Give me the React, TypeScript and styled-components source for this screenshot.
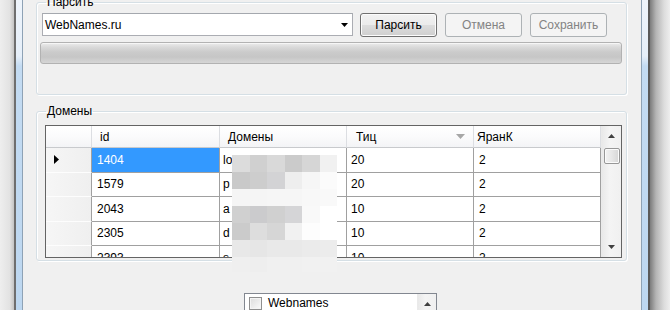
import { Fragment } from "react";
import styled, { createGlobalStyle } from "styled-components";

const GlobalStyle = createGlobalStyle`
  html, body { margin: 0; padding: 0; }
  body { background: #ececec; }
`;

type Row = { id: string; domain: string; tic: string; rank: string };

const rows: Row[] = [
  { id: "1404", domain: "lo", tic: "20", rank: "2" },
  { id: "1579", domain: "p", tic: "20", rank: "2" },
  { id: "2043", domain: "a", tic: "10", rank: "2" },
  { id: "2305", domain: "d", tic: "10", rank: "2" },
  { id: "2393", domain: "s", tic: "10", rank: "2" },
];

const columns = [
  { title: "id", pad: 8, sort: false },
  { title: "Домены", pad: 8, sort: false },
  { title: "Тиц", pad: 9, sort: true },
  { title: "ЯранК", pad: 3, sort: false },
];

// pixelated blur over the domain column
const mosaic = [
  ["#dcdcdc", "#d0d0d0", "#d9d9d9", "#cbcbcb", "#d6d6d6", "#f1f1f1"],
  ["#c9c9c9", "#cdcdcd", "#d3d3d5", "#eeeeee", "#f6f6f6", "#fbfbfb"],
  ["#f5f5f5", "#f5f5f5", "#f6f6f6", "#f6f6f6", "#f8f8f8", "#f9f9f9"],
  ["#d0d0d0", "#cbcbcd", "#d0d0d0", "#d5d5d7", "#f9f9f9", "#ffffff"],
  ["#cbcbcb", "#dddddd", "#d6d6d6", "#f1f1f1", "#fdfdfd", "#ffffff"],
  ["#e8e8e8", "#e6e6e6", "#e9e9e9", "#e9e9e9", "#ebebeb", "#ececec"],
  ["#efefef", "#eeeeee", "#f0f0f0", "#f0f0f0", "#f1f1f1", "#f1f1f1"],
];

const Screen = styled.div`
  position: relative;
  width: 670px;
  height: 310px;
  overflow: hidden;
  display: flex;
  font-family: "Liberation Sans", Arial, sans-serif;
  font-size: 12px;
  color: #000;
`;

const Shadow = styled.div<{ $side: "left" | "right" }>`
  width: ${(p) => (p.$side === "left" ? 14 : 20)}px;
  background: ${(p) =>
    p.$side === "left"
      ? "linear-gradient(to right, #eeeeee, #e2e2e2 70%, #c4c4c4)"
      : "linear-gradient(to right, #7c7c7c, #b4b4b4 30%, #dcdcdc 70%, #eeeeee)"};
`;

const FrameEdge = styled.div<{ $side: "left" | "right" }>`
  width: 9px;
  box-sizing: border-box;
  border-left: ${(p) => (p.$side === "left" ? "2px solid #6e6e6e" : "1px solid #8ea2b5")};
  border-right: ${(p) => (p.$side === "left" ? "1px solid #8ea2b5" : "2px solid #5a5a5a")};
  background: linear-gradient(#eef4fb 0, #e6eff9 56px, #c3dbf2 66px, #bdd7f0 100%);
`;

const Content = styled.div`
  flex: 1;
  background: #f0f0f0;
  display: flex;
  flex-direction: column;
  padding: 0 14px 0 13px;
`;

const GroupBox = styled.fieldset<{ $gap: number; $pt: number; $pb: number }>`
  margin: ${(p) => p.$gap}px 0 0;
  padding: ${(p) => p.$pt}px 4px ${(p) => p.$pb}px 3px;
  border: 1px solid #d5dfe5;
  border-radius: 3px;
  box-shadow: inset 1px 1px 0 #fff, 1px 1px 0 #fff;
  min-width: 0;
`;

const Legend = styled.legend`
  margin-left: 6px;
  padding: 0 1px;
  line-height: 14px;
  height: 14px;
  font-size: 12px;
`;

const Toolbar = styled.div`
  display: flex;
  align-items: center;
  height: 25px;
  padding-left: 2px;
`;

const Combo = styled.div`
  width: 311px;
  height: 23px;
  box-sizing: border-box;
  border: 1px solid #abadb3;
  border-top-color: #a4a8ae;
  background: #fff;
  display: flex;
  align-items: center;
  justify-content: space-between;
  padding: 0 4px 0 2px;
  margin-right: 7px;
`;

const Button = styled.button<{ $disabled?: boolean }>`
  width: 77px;
  height: 24px;
  margin-right: 8px;
  padding: 0;
  font: inherit;
  border-radius: 3px;
  border: 1px solid ${(p) => (p.$disabled ? "#adb2b5" : "#707070")};
  color: ${(p) => (p.$disabled ? "#838383" : "#000")};
  background: ${(p) =>
    p.$disabled
      ? "#f4f4f4"
      : "linear-gradient(#f2f2f2 0, #ebebeb 50%, #dddddd 50%, #cfcfcf 100%)"};
  box-shadow: inset 0 0 0 1px ${(p) => (p.$disabled ? "#f4f4f4" : "#fcfcfc")};
`;

const Progress = styled.div`
  height: 22px;
  margin: 5px 0 0 0;
  box-sizing: border-box;
  border: 1px solid #b2b2b2;
  border-radius: 3px;
  background: linear-gradient(#ececec 0, #dadada 20%, #cbcbcb 45%, #c6c6c6 70%, #d6d6d6 100%);
  box-shadow: inset 0 1px 0 #f6f6f6;
`;

const GridFrame = styled.div`
  display: flex;
  height: 133px;
  margin-left: 5px;
  box-sizing: border-box;
  border: 1px solid #646464;
  background: #fff;
`;

const Table = styled.div`
  display: grid;
  grid-template-columns: 46px 128px 127px 127px 127px;
  grid-template-rows: 22px repeat(5, 24.5px);
  overflow: hidden;
  flex: 1;
`;

const HeadCell = styled.div<{ $pad: number }>`
  display: flex;
  align-items: center;
  justify-content: space-between;
  padding: 0 8px 0 ${(p) => p.$pad}px;
  box-sizing: border-box;
  background: linear-gradient(#ffffff 0, #fbfbfc 50%, #f3f4f6 100%);
  border-right: 1px solid #dcdee2;
  border-bottom: 1px solid #c8cacd;
`;

const RowHead = styled.div`
  display: flex;
  align-items: center;
  padding-left: 8px;
  box-sizing: border-box;
  background: linear-gradient(to right, #f6f6f6, #efefef);
  border-right: 1px solid #a0a0a0;
  border-bottom: 1px solid #fdfdfd;
`;

const Cell = styled.div<{ $selected?: boolean; $pad?: number }>`
  display: flex;
  align-items: center;
  padding-left: ${(p) => p.$pad ?? 4}px;
  box-sizing: border-box;
  white-space: nowrap;
  overflow: hidden;
  border-right: 1px solid #a0a0a0;
  border-bottom: 1px solid #a0a0a0;
  background: ${(p) => (p.$selected ? "#3399ff" : "#fff")};
  color: ${(p) => (p.$selected ? "#fff" : "#000")};
`;

const ScrollBar = styled.div<{ $w: number }>`
  width: ${(p) => p.$w}px;
  display: flex;
  flex-direction: column;
  align-items: center;
  background: linear-gradient(to right, #e9e9e9, #f4f4f4 40%, #f0f0f0);
  border-left: 1px solid #eaeaea;
`;

const ArrowButton = styled.div<{ $h: number }>`
  height: ${(p) => p.$h}px;
  width: 100%;
  display: flex;
  align-items: center;
  justify-content: center;
`;

const Thumb = styled.div`
  width: 16px;
  height: 16px;
  margin-top: 2px;
  box-sizing: border-box;
  border: 1px solid #979797;
  border-radius: 2px;
  background: linear-gradient(to right, #f2f2f2, #e6e6e6 50%, #d6d6d6);
  box-shadow: inset 0 0 0 1px #fbfbfb;
`;

const Track = styled.div`
  flex: 1;
`;

const Mosaic = styled.div`
  position: absolute;
  left: 232px;
  top: 155px;
  width: 105px;
  display: grid;
  grid-template-columns: repeat(6, 1fr);
  grid-template-rows: repeat(6, 17px) 15px;
`;

const Tile = styled.div<{ $c: string }>`
  background: ${(p) => p.$c};
`;

const ListBox = styled.div`
  align-self: flex-start;
  margin: 32px 0 0 208px;
  width: 193px;
  height: 40px;
  box-sizing: border-box;
  border: 1px solid #828790;
  background: #fff;
  display: flex;
`;

const ListItem = styled.div`
  flex: 1;
  display: flex;
  align-items: flex-start;
  gap: 6px;
  padding: 2px 0 0 4px;
  line-height: 15px;
`;

const CheckBox = styled.span`
  width: 13px;
  height: 13px;
  margin-top: 1px;
  box-sizing: border-box;
  border: 1px solid #8f8f8f;
  background: linear-gradient(135deg, #dcdcdc, #fbfbfb);
  box-shadow: inset 0 0 0 1px #f4f4f4;
`;

const Triangle = ({ dir, color, w, h }: { dir: "up" | "down" | "right"; color: string; w: number; h: number }) => {
  const pts =
    dir === "up" ? `0,${h} ${w / 2},0 ${w},${h}` : dir === "down" ? `0,0 ${w},0 ${w / 2},${h}` : `0,0 ${w},${h / 2} 0,${h}`;
  return (
    <svg width={w} height={h} viewBox={`0 0 ${w} ${h}`}>
      <polygon points={pts} fill={color} />
    </svg>
  );
};

export default function App() {
  return (
    <>
      <GlobalStyle />
      <Screen>
        <Shadow $side="left" />
        <FrameEdge $side="left" />
        <Content>
          <GroupBox $gap={-5} $pt={3} $pb={30}>
            <Legend>Парсить</Legend>
            <Toolbar>
              <Combo>
                <span>WebNames.ru</span>
                <Triangle dir="down" color="#000" w={7} h={4} />
              </Combo>
              <Button>Парсить</Button>
              <Button $disabled>Отмена</Button>
              <Button $disabled>Сохранить</Button>
            </Toolbar>
            <Progress />
          </GroupBox>

          <GroupBox $gap={9} $pt={7} $pb={2}>
            <Legend>Домены</Legend>
            <GridFrame>
              <Table>
                <HeadCell $pad={0} />
                {columns.map((c) => (
                  <HeadCell key={c.title} $pad={c.pad}>
                    <span>{c.title}</span>
                    {c.sort && <Triangle dir="down" color="#a7a7a7" w={9} h={5} />}
                  </HeadCell>
                ))}
                {rows.map((r, i) => (
                  <Fragment key={r.id}>
                    <RowHead>{i === 0 && <Triangle dir="right" color="#000" w={5} h={9} />}</RowHead>
                    <Cell $selected={i === 0} $pad={5}>{r.id}</Cell>
                    <Cell $pad={3}>{r.domain}</Cell>
                    <Cell>{r.tic}</Cell>
                    <Cell $pad={5}>{r.rank}</Cell>
                  </Fragment>
                ))}
              </Table>
              <ScrollBar $w={19}>
                <ArrowButton $h={20}>
                  <Triangle dir="up" color="#404040" w={7} h={4} />
                </ArrowButton>
                <Thumb />
                <Track />
                <ArrowButton $h={20}>
                  <Triangle dir="down" color="#404040" w={7} h={4} />
                </ArrowButton>
              </ScrollBar>
            </GridFrame>
          </GroupBox>

          <ListBox>
            <ListItem>
              <CheckBox />
              <span>Webnames</span>
            </ListItem>
            <ScrollBar $w={18}>
              <ArrowButton $h={20}>
                <Triangle dir="up" color="#404040" w={7} h={4} />
              </ArrowButton>
            </ScrollBar>
          </ListBox>
        </Content>
        <FrameEdge $side="right" />
        <Shadow $side="right" />

        <Mosaic>
          {mosaic.flatMap((line, y) => line.map((c, x) => <Tile key={`${y}-${x}`} $c={c} />))}
        </Mosaic>
      </Screen>
    </>
  );
}
